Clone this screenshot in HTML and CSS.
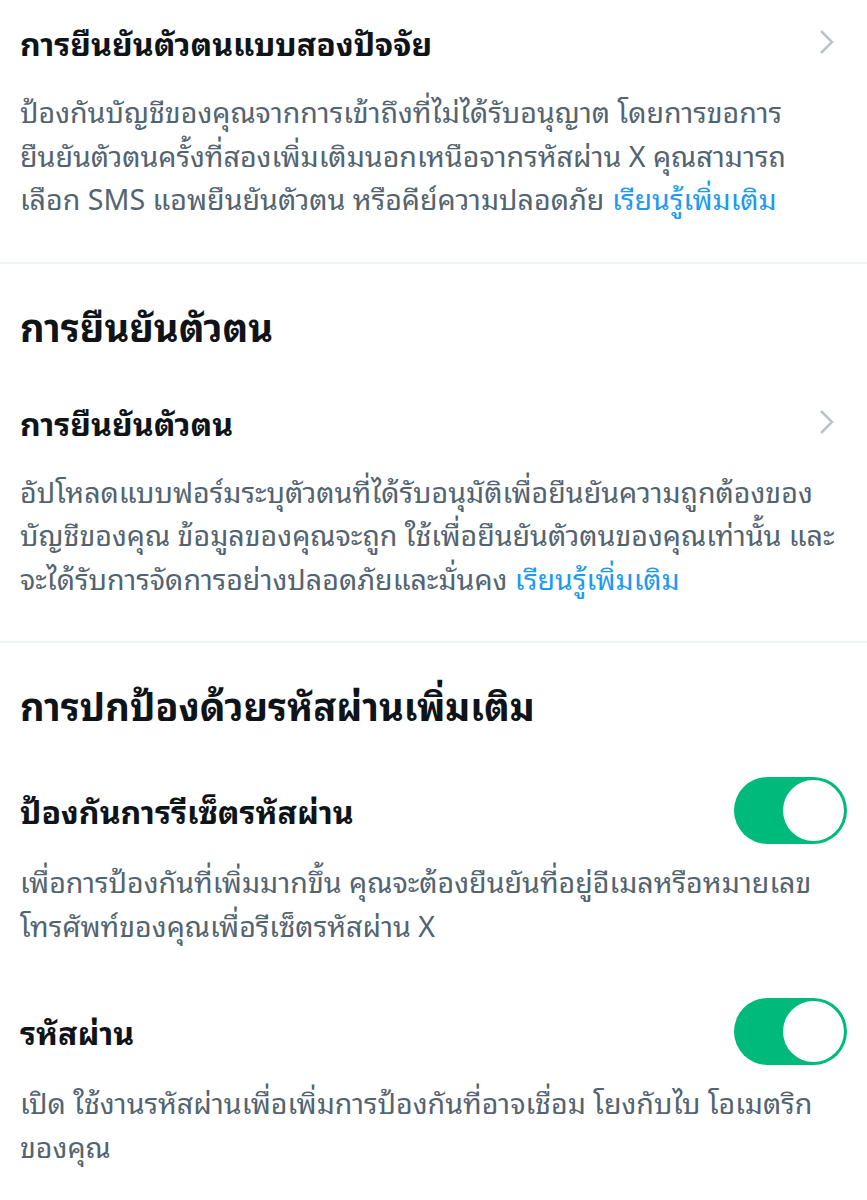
FILE: index.html
```html
<!DOCTYPE html>
<html lang="th">
<head>
    <meta charset="UTF-8">
    <meta name="viewport" content="width=device-width, initial-scale=1.0">
    <title>ความปลอดภัย</title>
    <link rel="stylesheet" href="styles.css">
</head>
<body>
    <!-- การยืนยันตัวตนแบบสองปัจจัย -->
    <div class="section">
        <div class="item">
            <div class="item-head">
                <span class="item-title">การยืนยันตัวตนแบบสองปัจจัย</span>
                <svg class="chevron" viewBox="0 0 16 26"><path d="M2 2 L13 13 L2 24"/></svg>
            </div>
            <p class="item-desc">ป้องกันบัญชีของคุณจากการเข้าถึงที่ไม่ได้รับอนุญาต โดยการขอการ<br>ยืนยันตัวตนครั้งที่สองเพิ่มเติมนอกเหนือจากรหัสผ่าน X คุณสามารถ<br>เลือก SMS แอพยืนยันตัวตน หรือคีย์ความปลอดภัย <a href="#">เรียนรู้เพิ่มเติม</a></p>
        </div>
    </div>

    <!-- การยืนยันตัวตน -->
    <div class="section">
        <h2 class="section-title">การยืนยันตัวตน</h2>
        <div class="item">
            <div class="item-head">
                <span class="item-title">การยืนยันตัวตน</span>
                <svg class="chevron" viewBox="0 0 16 26"><path d="M2 2 L13 13 L2 24"/></svg>
            </div>
            <p class="item-desc">อัปโหลดแบบฟอร์มระบุตัวตนที่ได้รับอนุมัติเพื่อยืนยันความถูกต้องของ<br>บัญชีของคุณ ข้อมูลของคุณจะถูก ใช้เพื่อยืนยันตัวตนของคุณเท่านั้น และ<br>จะได้รับการจัดการอย่างปลอดภัยและมั่นคง <a href="#">เรียนรู้เพิ่มเติม</a></p>
        </div>
    </div>

    <!-- การปกป้องด้วยรหัสผ่านเพิ่มเติม -->
    <div class="section last">
        <h2 class="section-title">การปกป้องด้วยรหัสผ่านเพิ่มเติม</h2>
        <div class="item switch-item">
            <div class="item-head">
                <span class="item-title">ป้องกันการรีเซ็ตรหัสผ่าน</span>
                <span class="toggle on"><span class="knob"></span></span>
            </div>
            <p class="item-desc">เพื่อการป้องกันที่เพิ่มมากขึ้น คุณจะต้องยืนยันที่อยู่อีเมลหรือหมายเลข<br>โทรศัพท์ของคุณเพื่อรีเซ็ตรหัสผ่าน X</p>
        </div>
        <div class="item switch-item">
            <div class="item-head">
                <span class="item-title">รหัสผ่าน</span>
                <span class="toggle on"><span class="knob"></span></span>
            </div>
            <p class="item-desc">เปิด ใช้งานรหัสผ่านเพื่อเพิ่มการป้องกันที่อาจเชื่อม โยงกับไบ โอเมตริก<br>ของคุณ</p>
        </div>
    </div>
</body>
</html>
```

FILE: styles.css
```css
body {
    margin: 0;
    padding: 0;
    background-color: #fff;
    font-family: "Noto Sans Thai Looped", "Noto Sans Thai", "Noto Sans", "Liberation Sans", sans-serif;
    color: #0f1419;
}
.section {
    border-bottom: 2px solid #eff3f4;
    padding: 0 20px 42px;
}
.section.last {
    border-bottom: none;
}
.section-title {
    margin: 0;
    padding-top: 37px;
    font-size: 38px;
    line-height: 48px;
    font-weight: 700;
}
.item {
    padding-top: 20px;
}
.section-title + .item {
    padding-top: 51px;
}
.section-title + .switch-item {
    padding-top: 60px;
}
.item + .item {
    padding-top: 63px;
}
.item-head {
    display: flex;
    align-items: center;
    justify-content: space-between;
    height: 44px;
}
.item-title {
    font-size: 32px;
    line-height: 44px;
    font-weight: 700;
}
.chevron {
    width: 16px;
    height: 26px;
    margin-right: 12px;
    fill: none;
    stroke: #b9c3ca;
    stroke-width: 2.5;
}
.item-desc {
    margin: 25px 0 0;
    font-size: 28.6px;
    line-height: 43.5px;
    color: #536471;
    white-space: nowrap;
}
.switch-item .item-desc {
    margin-top: 27px;
}
.item-desc a {
    color: #1d9bf0;
    text-decoration: none;
}
.toggle {
    display: flex;
    align-items: center;
    justify-content: flex-end;
    box-sizing: border-box;
    width: 113px;
    height: 67px;
    margin: -12px 0 -12px 0;
    padding: 3px;
    border-radius: 34px;
    background-color: #00ba7c;
}
.knob {
    width: 61px;
    height: 61px;
    border-radius: 50%;
    background-color: #fff;
}
```
